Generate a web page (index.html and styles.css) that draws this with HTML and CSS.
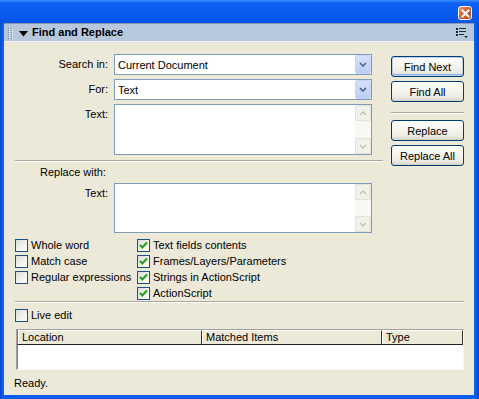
FILE: index.html
```html
<!DOCTYPE html>
<html lang="en">
<head>
  <meta charset="UTF-8">
  <title>Find and Replace</title>
  <link rel="stylesheet" href="styles.css">
</head>
<body>

  <div class="window">
    <div class="titlebar">
      <span class="close-btn">
        <svg width="9" height="9" viewBox="0 0 9 9"><path d="M1.5 1.5L7.5 7.5M7.5 1.5L1.5 7.5" stroke="#fff" stroke-width="2" stroke-linecap="square"/></svg>
      </span>
    </div>

    <div class="frame">
      <div class="panel-head">
        <svg class="gripper" width="5" height="11" viewBox="0 0 5 11">
          <g fill="#7d8ca3">
            <rect x="0" y="0" width="1" height="1"/><rect x="0" y="2" width="1" height="1"/><rect x="0" y="4" width="1" height="1"/><rect x="0" y="6" width="1" height="1"/><rect x="0" y="8" width="1" height="1"/><rect x="0" y="10" width="1" height="1"/>
            <rect x="3" y="0" width="1" height="1"/><rect x="3" y="2" width="1" height="1"/><rect x="3" y="4" width="1" height="1"/><rect x="3" y="6" width="1" height="1"/><rect x="3" y="8" width="1" height="1"/><rect x="3" y="10" width="1" height="1"/>
          </g>
          <g fill="#ffffff">
            <rect x="1" y="1" width="1" height="1"/><rect x="1" y="3" width="1" height="1"/><rect x="1" y="5" width="1" height="1"/><rect x="1" y="7" width="1" height="1"/><rect x="1" y="9" width="1" height="1"/>
            <rect x="4" y="1" width="1" height="1"/><rect x="4" y="3" width="1" height="1"/><rect x="4" y="5" width="1" height="1"/><rect x="4" y="7" width="1" height="1"/><rect x="4" y="9" width="1" height="1"/>
          </g>
        </svg>
        <svg class="twisty" width="9" height="6" viewBox="0 0 9 6"><path d="M0 0H9L4.5 5.5Z" fill="#000"/></svg>
        <span class="panel-title">Find and Replace</span>
        <svg class="panel-menu" width="12" height="11" viewBox="0 0 12 11">
          <g fill="#1e2a3c">
            <rect x="0" y="0" width="2" height="2"/><rect x="3" y="0" width="7" height="1"/>
            <rect x="0" y="3" width="2" height="2"/><rect x="3" y="3" width="7" height="1"/>
            <rect x="0" y="6" width="2" height="2"/><rect x="3" y="6" width="5" height="1"/>
            <path d="M8 8H12L10 10Z"/>
          </g>
        </svg>
      </div>

      <div class="panel-body">
        <div class="search">
          <div class="fields">
            <div class="row">
              <span class="label">Search in:</span>
              <div class="combo">
                <span class="combo-text">Current Document</span>
                <span class="combo-btn"><svg width="8" height="5" viewBox="0 0 8 5"><path d="M1 1L4 4L7 1" fill="none" stroke="#4d6185" stroke-width="1.6"/></svg></span>
              </div>
            </div>
            <div class="row">
              <span class="label">For:</span>
              <div class="combo">
                <span class="combo-text">Text</span>
                <span class="combo-btn"><svg width="8" height="5" viewBox="0 0 8 5"><path d="M1 1L4 4L7 1" fill="none" stroke="#4d6185" stroke-width="1.6"/></svg></span>
              </div>
            </div>
            <div class="row">
              <span class="label">Text:</span>
              <div class="textbox find-text">
                <div class="scrollbar">
                  <span class="scroll-btn"><svg width="8" height="5" viewBox="0 0 8 5"><path d="M1 4L4 1L7 4" fill="none" stroke="#c3c3b8" stroke-width="1.5"/></svg></span>
                  <span class="scroll-track"></span>
                  <span class="scroll-btn"><svg width="8" height="5" viewBox="0 0 8 5"><path d="M1 1L4 4L7 1" fill="none" stroke="#c3c3b8" stroke-width="1.5"/></svg></span>
                </div>
              </div>
            </div>

            <div class="rule form-rule"></div>

            <div class="row replace-head">
              <span class="label">Replace with:</span>
            </div>
            <div class="row">
              <span class="label">Text:</span>
              <div class="textbox replace-text">
                <div class="scrollbar">
                  <span class="scroll-btn"><svg width="8" height="5" viewBox="0 0 8 5"><path d="M1 4L4 1L7 4" fill="none" stroke="#c3c3b8" stroke-width="1.5"/></svg></span>
                  <span class="scroll-track"></span>
                  <span class="scroll-btn"><svg width="8" height="5" viewBox="0 0 8 5"><path d="M1 1L4 4L7 1" fill="none" stroke="#c3c3b8" stroke-width="1.5"/></svg></span>
                </div>
              </div>
            </div>
          </div>

          <div class="actions">
            <button class="btn default">Find Next</button>
            <button class="btn">Find All</button>
            <div class="rule action-rule"></div>
            <button class="btn">Replace</button>
            <button class="btn">Replace All</button>
          </div>
        </div>

        <div class="options">
          <div class="option-col left-col">
            <div class="check"><span class="box"></span>Whole word</div>
            <div class="check"><span class="box"></span>Match case</div>
            <div class="check"><span class="box"></span>Regular expressions</div>
          </div>
          <div class="option-col">
            <div class="check"><span class="box"><svg width="11" height="11" viewBox="0 0 11 11"><path d="M2 5L4.3 7.5L9 2.5" fill="none" stroke="#21a121" stroke-width="2"/></svg></span>Text fields contents</div>
            <div class="check"><span class="box"><svg width="11" height="11" viewBox="0 0 11 11"><path d="M2 5L4.3 7.5L9 2.5" fill="none" stroke="#21a121" stroke-width="2"/></svg></span>Frames/Layers/Parameters</div>
            <div class="check"><span class="box"><svg width="11" height="11" viewBox="0 0 11 11"><path d="M2 5L4.3 7.5L9 2.5" fill="none" stroke="#21a121" stroke-width="2"/></svg></span>Strings in ActionScript</div>
            <div class="check"><span class="box"><svg width="11" height="11" viewBox="0 0 11 11"><path d="M2 5L4.3 7.5L9 2.5" fill="none" stroke="#21a121" stroke-width="2"/></svg></span>ActionScript</div>
          </div>
        </div>

        <div class="rule wide-rule"></div>

        <div class="check live-edit"><span class="box"></span>Live edit</div>

        <div class="results">
          <div class="results-head">
            <span class="col col-location">Location</span>
            <span class="col col-matched">Matched Items</span>
            <span class="col col-type">Type</span>
          </div>
          <div class="results-body"></div>
        </div>

        <div class="status">Ready.</div>
      </div>
    </div>
  </div>

</body>
</html>
```

FILE: styles.css
```css
* {
  box-sizing: border-box;
}

body {
  margin: 0;
  padding: 0;
  font-family: "Liberation Sans", Arial, sans-serif;
  font-size: 11px;
  color: #000;
  background: #0a5ae8;
}

.window {
  width: 479px;
  height: 399px;
  display: flex;
  flex-direction: column;
  background: linear-gradient(to right, #0841c8 0, #0a5ef0 2px, #0a5ef0 calc(100% - 3px), #0840c4 100%);
}

/* title bar */

.titlebar {
  height: 23px;
  flex-shrink: 0;
  display: flex;
  justify-content: flex-end;
  align-items: flex-start;
  padding: 6px 7px 0 0;
  background: linear-gradient(#3b8cff 0, #0c62f5 3px, #0a5cf0 12px, #0757ec 20px, #0650e0 23px);
}

.close-btn {
  width: 14px;
  height: 14px;
  border: 1px solid #fff;
  border-radius: 3px;
  background: linear-gradient(135deg, #e9956a 0%, #d2622d 45%, #b5481a 100%);
  display: flex;
  align-items: center;
  justify-content: center;
}

.close-btn svg {
  display: block;
}

/* panel */

.frame {
  flex: 1;
  margin: 0 5px 4px 4px;
  background: #ece9d8;
  display: flex;
  flex-direction: column;
}

.panel-head {
  height: 19px;
  flex-shrink: 0;
  display: flex;
  align-items: center;
  padding: 0 6px 0 4px;
  background: #b8c8dc;
  border-top: 1px solid #8d9bb0;
  border-bottom: 1px solid #eef2f8;
}

.gripper {
  display: block;
  margin-top: 1px;
}

.twisty {
  display: block;
  margin: 2px 0 0 6px;
}

.panel-title {
  font-weight: bold;
  margin-left: 4px;
  line-height: 13px;
  flex: 1;
}

.panel-menu {
  display: block;
  margin-top: 2px;
}

.panel-body {
  flex: 1;
  padding: 12px 10px 0 11px;
  display: flex;
  flex-direction: column;
}

/* search form */

.search {
  display: flex;
  align-items: flex-start;
}

.fields {
  width: 368px;
  display: flex;
  flex-direction: column;
}

.row {
  display: flex;
  align-items: flex-start;
  margin-bottom: 4px;
}

.label {
  width: 93px;
  flex-shrink: 0;
  text-align: right;
  padding-top: 4px;
  line-height: 13px;
  margin-right: 6px;
}

.combo {
  width: 258px;
  height: 21px;
  border: 1px solid #7f9db9;
  background: #fff;
  display: flex;
  align-items: center;
}

.combo-text {
  flex: 1;
  padding-left: 3px;
}

.combo-btn {
  width: 16px;
  height: 19px;
  background: linear-gradient(#d6e2fc, #bccdf3);
  border: 1px solid #c6d5f5;
  border-radius: 2px;
  display: flex;
  align-items: center;
  justify-content: center;
}

.combo-btn svg,
.scroll-btn svg {
  display: block;
}

.textbox {
  width: 258px;
  border: 1px solid #7f9db9;
  background: #fff;
  display: flex;
  justify-content: flex-end;
}

.find-text {
  height: 51px;
  margin-bottom: 1px;
}

.replace-text {
  height: 50px;
}

.scrollbar {
  width: 16px;
  display: flex;
  flex-direction: column;
  background: #f4f3ee;
}

.scroll-btn {
  height: 16px;
  background: #f2f1ea;
  border: 1px solid #e3e2d8;
  border-radius: 2px;
  display: flex;
  align-items: center;
  justify-content: center;
}

.scroll-track {
  flex: 1;
  background: repeating-linear-gradient(#f4f3ee 0, #f4f3ee 1px, #fbfbf8 1px, #fbfbf8 2px);
}

.rule {
  height: 2px;
  border-top: 1px solid #aca899;
  border-bottom: 1px solid #fff;
}

.form-rule {
  margin: 0 0 4px;
}

.replace-head .label {
  padding-top: 0;
  padding-right: 2px;
}

.replace-head {
  margin-bottom: 4px;
}

/* buttons */

.actions {
  width: 73px;
  margin-left: 8px;
  padding-top: 2px;
  display: flex;
  flex-direction: column;
}

.btn {
  height: 21px;
  padding: 0;
  font: inherit;
  color: #000;
  border: 1px solid #003c74;
  border-radius: 3px;
  background: linear-gradient(#ffffff 0, #f7f6f1 40%, #ecebe3 80%, #d6d0c5 100%);
  margin-bottom: 4px;
}

.btn.default {
  box-shadow: inset 0 0 0 1px #b8d0f0, inset 0 -1px 0 1px #8db2e3;
}

.action-rule {
  margin: 5px 0 6px;
}

.btn + .btn {
  margin-bottom: 5px;
}

/* options */

.options {
  display: flex;
  margin-top: 2px;
}

.option-col {
  display: flex;
  flex-direction: column;
  gap: 3px;
}

.left-col {
  width: 122px;
}

.check {
  display: flex;
  align-items: center;
  height: 13px;
  line-height: 13px;
  white-space: nowrap;
}

.box {
  width: 13px;
  height: 13px;
  flex-shrink: 0;
  margin-right: 3px;
  border: 1px solid #1c5180;
  background: linear-gradient(135deg, #dcdcd7 0%, #f2f2ef 60%, #ffffff 100%);
  display: flex;
  align-items: center;
  justify-content: center;
}

.box svg {
  display: block;
}

.wide-rule {
  margin-top: 1px;
}

.live-edit {
  margin-top: 6px;
}

/* results list */

.results {
  margin-top: 7px;
  margin-left: 1px;
  height: 41px;
  border: 1px solid;
  border-color: #a0a0a0 #f7f7f4 #f7f7f4 #a0a0a0;
  background: #fff;
  display: flex;
  flex-direction: column;
}

.results-head {
  display: flex;
  height: 15px;
  border-left: 1px solid #808080;
  border-bottom: 1px solid #222;
}

.col {
  height: 14px;
  padding-left: 3px;
  line-height: 13px;
  background: #ece9d8;
  border-top: 1px solid #fff;
  border-left: 1px solid #fff;
  border-right: 1px solid #333;
}

.col-location {
  width: 184px;
}

.col-matched {
  width: 180px;
}

.col-type {
  flex: 1;
}

.results-body {
  flex: 1;
  border-left: 1px solid #808080;
}

.status {
  margin-top: 7px;
  margin-left: -1px;
  line-height: 13px;
}
```
